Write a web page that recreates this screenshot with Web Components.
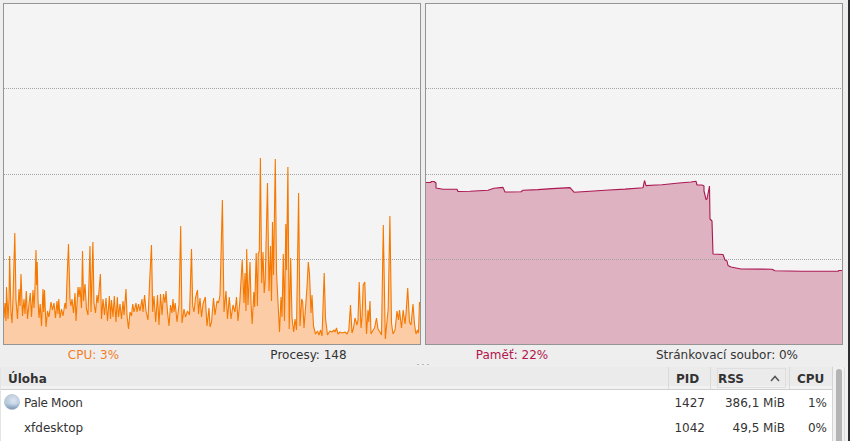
<!DOCTYPE html>
<html lang="cs">
<head>
<meta charset="utf-8">
<title>Správce úloh</title>
<style>
    html, body {
        margin: 0;
        height: 100%;
        overflow: hidden;
    }
</style>
</head>
<body>
<task-manager></task-manager>

<script>
const managerTemplate = document.createElement("template")

managerTemplate.innerHTML = `
    <style>
        :host {
            display: flex;
            flex-direction: column;
            box-sizing: border-box;
            width: 850px;
            height: 441px;
            padding: 3px 0 0 0;
            border-right: 2px solid #2b2d30;
            background: #eeeeee;
            color: #333333;
            font: 12px/14px "DejaVu Sans", sans-serif;
            overflow: hidden;
        }
        .charts {
            display: grid;
            grid-template-columns: 418px 418px;
            gap: 4px;
            padding-left: 3px;
        }
        .labels {
            display: grid;
            grid-template-columns: 187px 241px 166px 254px;
            height: 15px;
            padding-top: 3px;
            text-align: center;
        }
        .cpu { color: #f57d1f; }
        .processes { padding-left: 2px; }
        .memory { color: #b3164c; padding-left: 2px; }
        .swap { padding-left: 12px; }
        .grip {
            display: flex;
            justify-content: center;
            gap: 3px;
            height: 4px;
            padding-right: 2px;
            box-sizing: border-box;
        }
        .grip i {
            width: 2px;
            height: 1px;
            margin-top: 1px;
            background: #b8b8b8;
        }
        .list {
            display: flex;
            flex: 1;
            min-height: 0;
        }
        process-table { flex: none; }
        scroll-bar { flex: 1; }
        .tight { letter-spacing: -0.3px; }
    </style>
    <div class="charts">
        <usage-chart kind="cpu"></usage-chart>
        <usage-chart kind="memory"></usage-chart>
    </div>
    <div class="labels">
        <span class="cpu">CPU: 3%</span>
        <span class="processes">Procesy: 148</span>
        <span class="memory">Paměť: 22%</span>
        <span class="swap">Stránkovací soubor: 0%</span>
    </div>
    <div class="grip"><i></i><i></i><i></i></div>
    <div class="list">
        <process-table>
            <process-row pid="1427" rss="386,1 MiB" cpu="1%"><moon-icon slot="icon"></moon-icon><span class="tight">Pale Moon</span></process-row>
            <process-row pid="1042" rss="49,5 MiB" cpu="0%">xfdesktop</process-row>
        </process-table>
        <scroll-bar></scroll-bar>
    </div>
`

class TaskManager extends HTMLElement {
    constructor() {
        super()

        this.attachShadow({ mode: "open" })
        this.shadowRoot.appendChild(managerTemplate.content.cloneNode(true))
    }
}

// samples as "x,y" in window pixels, the viewBox of each chart starts at its own left edge
const charts = {
    cpu: {
        left: 3,
        line: "#f57900",
        fill: "#fbcca6",
        points: `3,300 4,318 5,303 6,321 6.5,287 8,319 9,300 9.6,256 11,312 12,323 13,298 14.8,233 16,300 17.5,319 19,289 20,306
            21,274 22.5,316 24,299 25,314 26.3,291 27.5,319 29,304 30.3,293 31.5,317 33,290 34,308 35,287 36,250 36.6,285 37.2,262
            38,300 39,318 40.2,304 41.5,326 43,289 43.7,312 44.5,290 46,327 47.5,311 49,317 51,302 52.5,310 54,303 55.5,318 57,301
            58,314 58.8,299 60,318 61.5,309 63,316 65,303 66,309 67,280 68.5,244 70,300 71,306 72,299 73.5,313 75,293 76,321 78,287
            79,297 80,287 81.5,308 82.5,251 83.5,301 85,284 86.5,309 88,315 90,246 91,312 92.9,242 94,303 95.5,313 97,295 98,303
            100.4,274 101.5,319 103,299 104.5,315 106,298 107.5,321 109.4,296 110.5,319 111.5,300 113,317 114.3,296 116,322
            117.3,297 118.5,317 120,304 121.5,319 123,301 124,315 126,289 127,315 128.5,329 130,312 131.5,316 132.7,304 134,312
            136,303 137,312 138.5,304 140,311 142,299 143,312 144.6,295 146,311 148,320 149.5,284 151.5,245 152.7,312 154,296
            155.7,322 157.5,295 159,325 160.5,294 162,315 163.5,294 165,303 166,291 167.5,312 169,326 170.5,305 172,313 173,299
            174,312 175.2,303 177,322 179,305 180.7,226 182,323 184,309 185.5,317 187.5,311 189.5,315 191.5,249 192.7,306
            194,312 195.5,298 197.5,290 198.5,314 200,298 201.5,317 203,304 205.3,297 207,326 209,308 210,327 211.5,322 213.5,298
            215,315 217,301 218.5,303 220,295 222.4,200 224,312 226,291 227.5,319 229.3,297 231,319 233,305 235,312 236.5,297
            238,321 239.8,302 242.2,260 244,303 245,273 246,311 246.7,249 248,305 250,262 251,303 252.2,324 253.8,292 254.7,307
            256.2,253 257.4,306 258.2,254 259.3,251 260.4,158 261.7,283 263,252 264.2,293 265.2,281 267.5,183 269,291 270.5,246
            271.5,301 272.5,222 273.5,275 275.3,159 276.5,272 278,302 279.5,332 281,297 282,317 283.3,254 284.5,321 285.8,224
            286.5,270 287.9,167 289.2,329 290.7,258 292,318 293.7,332 295,319 296.5,330 298.6,193 300,326 301.7,299 302.7,302
            304,328 306,301 307,287 308.3,262 309.5,274 311,313 312,295 313.5,326 315.5,334 317.5,331 319,335 320.5,330
            322,336 324.2,273 325.5,318 327.5,335 330,331 332,332 334,330 335,332 336.5,328 338,334 340,332 342,333 345,332
            347,334 348.8,330 350.5,305 352,333 353.5,328 355,318 357,325 358,320 359.2,282 361,328 362,318 363.2,285
            364.8,282 366.5,334 368,310 368.8,322 370,301 371,334 372.5,331 374.5,328 376.5,318 378,329 380,332 381.5,335
            383.3,225 385.3,339 387,321 388.2,309 389.9,216 391.5,323 393,334 395,330 397,311 398.5,320 399.5,310 401.5,328
            403.2,310 405,324 406,314 407.7,288 409.5,322 411,325 413,304 414.5,324 416,334 417.5,330 418.5,333 419.5,302`
    },
    memory: {
        left: 425,
        line: "#ab1852",
        fill: "#deb2c1",
        points: `425,182.5 431,182.5 431,181.5 434,181.5 436,183 436,188 443,189.2 457,189.2 458,191.5 470,191.2 488,190.2
            494,188.3 503,187.4 505,192 521,191.8 523,190.3 538,189.6 552,188.6 570,187.6 574,192.2 590,191.2 609,190
            625,189.1 643,187.8 644.5,180.5 646,185.6 656,185 662,184.8 679,183 691,182 696,181.2 697,185 702,185 704,186
            704,191 706,199.5 707,199 709.5,186 710,219 712,221 713,254 723,254.5 725,260 727,261 728,265.5 731,267
            741,269 772,269.2 775,270.8 802,271.2 838,271.2 839,270.5 843,270.5`
    }
}

const chartTemplate = document.createElement("template")

chartTemplate.innerHTML = `
    <style>
        :host {
            display: block;
            box-sizing: border-box;
            height: 342px;
            border: 1px solid #949494;
            background: #f4f4f4;
        }
        svg {
            display: block;
            width: 100%;
            height: 100%;
        }
        .grid {
            stroke: #a4a4a4;
            stroke-dasharray: 1 1;
        }
        .line {
            fill: none;
            stroke-width: 1.1;
            stroke-linejoin: bevel;
        }
    </style>
    <svg>
        <polygon class="area"></polygon>
        <path class="grid" d="M0 84.5H416M0 170.5H416M0 255.5H416"></path>
        <polyline class="line"></polyline>
    </svg>
`

class UsageChart extends HTMLElement {
    constructor() {
        super()

        this.attachShadow({ mode: "open" })
        this.shadowRoot.appendChild(chartTemplate.content.cloneNode(true))

        const chart = charts[this.getAttribute("kind")]
        const svg = this.shadowRoot.querySelector("svg")
        const area = this.shadowRoot.querySelector(".area")
        const line = this.shadowRoot.querySelector(".line")
        const points = chart.points.trim().split(/\s+/).map(point => {
            const [x, y] = point.split(",").map(Number)
            return `${x - chart.left - 1},${y - 4}`
        })

        svg.setAttribute("viewBox", "0 0 416 340")
        line.setAttribute("points", points.join(" "))
        line.style.stroke = chart.line
        area.setAttribute("points", `-1,341 ${points.join(" ")} 418,341`)
        area.style.fill = chart.fill
    }
}

const tableTemplate = document.createElement("template")

tableTemplate.innerHTML = `
    <style>
        :host {
            display: flex;
            flex-direction: column;
            box-sizing: border-box;
            width: 833px;
            border-left: 1px solid #e2e4e6;
            border-right: 1px solid #d4d4d4;
            background: #ffffff;
        }
        .head {
            display: grid;
            grid-template-columns: 668px 42px 79px 42px;
            grid-template-rows: 22px;
            box-sizing: border-box;
            height: 23px;
            flex: none;
            border-bottom: 1px solid #cfcfcf;
            background: linear-gradient(#ebebeb 19px, #f2f2f2 19px);
            font-weight: bold;
            line-height: 24px;
        }
        .head span {
            box-sizing: border-box;
            padding-left: 7px;
            border-right: 1px solid #dadada;
        }
        .head span:last-child { border-right: 0; }
        .head .sorted {
            display: flex;
            align-items: center;
            justify-content: space-between;
            box-sizing: border-box;
            height: 20px;
            margin: 1px 3px 1px 6px;
            padding: 2px 5px 0 0;
            border: 1px solid #dfdfdf;
            line-height: 18px;
        }
        .cell { border-right: 1px solid #dadada; }
        .head svg {
            width: 10px;
            height: 7px;
            margin-bottom: 1px;
            fill: none;
            stroke: #555555;
            stroke-width: 1.5;
        }
    </style>
    <div class="head">
        <span>Úloha</span>
        <span>PID</span>
        <div class="cell"><div class="sorted">RSS<svg viewBox="0 0 10 7"><path d="M1 6 5 1.5 9 6"></path></svg></div></div>
        <span>CPU</span>
    </div>
    <slot></slot>
`

class ProcessTable extends HTMLElement {
    constructor() {
        super()

        this.attachShadow({ mode: "open" })
        this.shadowRoot.appendChild(tableTemplate.content.cloneNode(true))
    }
}

const rowTemplate = document.createElement("template")

rowTemplate.innerHTML = `
    <style>
        :host {
            display: grid;
            grid-template-columns: 20px 640px 41px 80px 42px;
            padding-left: 3px;
            height: 25px;
            flex: none;
            line-height: 26px;
        }
        .icon { padding-top: 4px; line-height: 0; }
        .number { text-align: right; }
    </style>
    <span class="icon"><slot name="icon"></slot></span>
    <span><slot></slot></span>
    <span class="number" id="pid"></span>
    <span class="number" id="rss"></span>
    <span class="number" id="cpu"></span>
`

class ProcessRow extends HTMLElement {
    constructor() {
        super()

        this.attachShadow({ mode: "open" })
        this.shadowRoot.appendChild(rowTemplate.content.cloneNode(true))

        for (const name of ["pid", "rss", "cpu"]) {
            this.shadowRoot.getElementById(name).textContent = this.getAttribute(name)
        }
    }
}

const moonTemplate = document.createElement("template")

moonTemplate.innerHTML = `
    <style>
        :host { display: block; width: 16px; height: 16px; }
        svg { display: block; }
    </style>
    <svg width="16" height="16" viewBox="0 0 16 16">
        <defs>
            <linearGradient id="base" x1="0" y1="0" x2="0" y2="1">
                <stop offset="0" stop-color="#c3cddb"></stop>
                <stop offset=".6" stop-color="#b6cae0"></stop>
                <stop offset="1" stop-color="#7d95b2"></stop>
            </linearGradient>
            <radialGradient id="shine" cx=".6" cy=".4" r=".45">
                <stop offset="0" stop-color="#dfe8f2" stop-opacity=".9"></stop>
                <stop offset="1" stop-color="#dfe8f2" stop-opacity="0"></stop>
            </radialGradient>
        </defs>
        <circle cx="8" cy="8" r="7.6" fill="url(#base)" stroke="#a3b1c1" stroke-width=".5"></circle>
        <circle cx="8" cy="8" r="7.4" fill="url(#shine)"></circle>
    </svg>
`

class MoonIcon extends HTMLElement {
    constructor() {
        super()

        this.attachShadow({ mode: "open" })
        this.shadowRoot.appendChild(moonTemplate.content.cloneNode(true))
    }
}

const scrollTemplate = document.createElement("template")

scrollTemplate.innerHTML = `
    <style>
        :host {
            display: block;
            box-sizing: border-box;
            padding: 2px 0 0 3px;
            background: linear-gradient(90deg, #f0f0f0 11px, #dcdcdc 11px 12px, #f0f0f0 12px);
        }
        div {
            width: 6px;
            height: 100%;
            border-radius: 3px 3px 0 0;
            background: #b4b4b4;
        }
    </style>
    <div></div>
`

class ScrollBar extends HTMLElement {
    constructor() {
        super()

        this.attachShadow({ mode: "open" })
        this.shadowRoot.appendChild(scrollTemplate.content.cloneNode(true))
    }
}

window.customElements.define("usage-chart", UsageChart)
window.customElements.define("moon-icon", MoonIcon)
window.customElements.define("process-row", ProcessRow)
window.customElements.define("process-table", ProcessTable)
window.customElements.define("scroll-bar", ScrollBar)
window.customElements.define("task-manager", TaskManager)
</script>
</body>
</html>
